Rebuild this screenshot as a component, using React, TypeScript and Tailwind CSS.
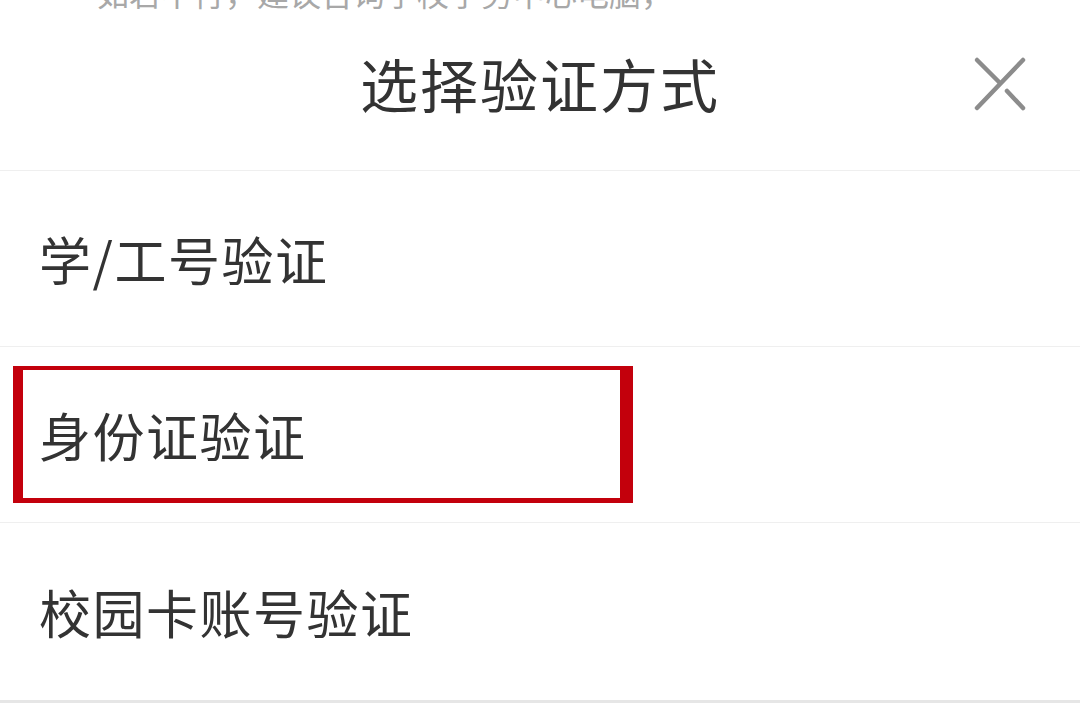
import React from "react";

const font = { fontFamily: '"Noto Sans CJK SC", "Noto Sans", sans-serif' };

function CloseIcon() {
  return (
    <svg width="56" height="60" viewBox="0 0 56 60" fill="none" stroke="#8c8c8c" strokeWidth="4.5" strokeLinecap="round">
      <line x1="4" y1="4" x2="27" y2="27" />
      <line x1="50" y1="4" x2="4" y2="52" />
      <line x1="34" y1="35" x2="50" y2="52" />
    </svg>
  );
}

function Row({ label, children }: { label: string; children?: React.ReactNode }) {
  return (
    <div className="relative h-[176px] border-t border-[#efefef] flex items-center pl-[39px]">
      {children}
      <span className="relative text-[52px] leading-none tracking-[1.5px] text-[#333333]">{label}</span>
    </div>
  );
}

export default function App() {
  return (
    <div className="w-[1080px] h-[716px] bg-white overflow-hidden flex flex-col" style={font}>
      <div className="h-[10px] overflow-hidden relative">
        <div className="absolute left-[97px] top-[-24px] text-[32px] leading-[32px] text-[#a8a8a8] whitespace-nowrap">
          如若不行，建议咨询学校学务中心电脑，
        </div>
      </div>
      <div className="relative h-[160px] flex items-center justify-center pb-[14px]">
        <span className="text-[58px] leading-none tracking-[2px] text-[#333333]">选择验证方式</span>
        <div className="absolute left-[973px] top-[46px]">
          <CloseIcon />
        </div>
      </div>
      <Row label="学/工号验证" />
      <Row label="身份证验证">
        <div className="absolute left-[13px] top-[19px] w-[620px] h-[137px] border-[#c3000c] border-l-[10px] border-r-[13px] border-t-[4px] border-b-[5px]" />
      </Row>
      <div className="relative h-[178px] border-t border-[#efefef] flex items-center pl-[39px]">
        <span className="text-[52px] leading-none tracking-[1.5px] text-[#333333]">校园卡账号验证</span>
      </div>
      <div className="h-[3px] bg-[#e6e6e6]" />
      <div className="flex-1 bg-white" />
    </div>
  );
}
